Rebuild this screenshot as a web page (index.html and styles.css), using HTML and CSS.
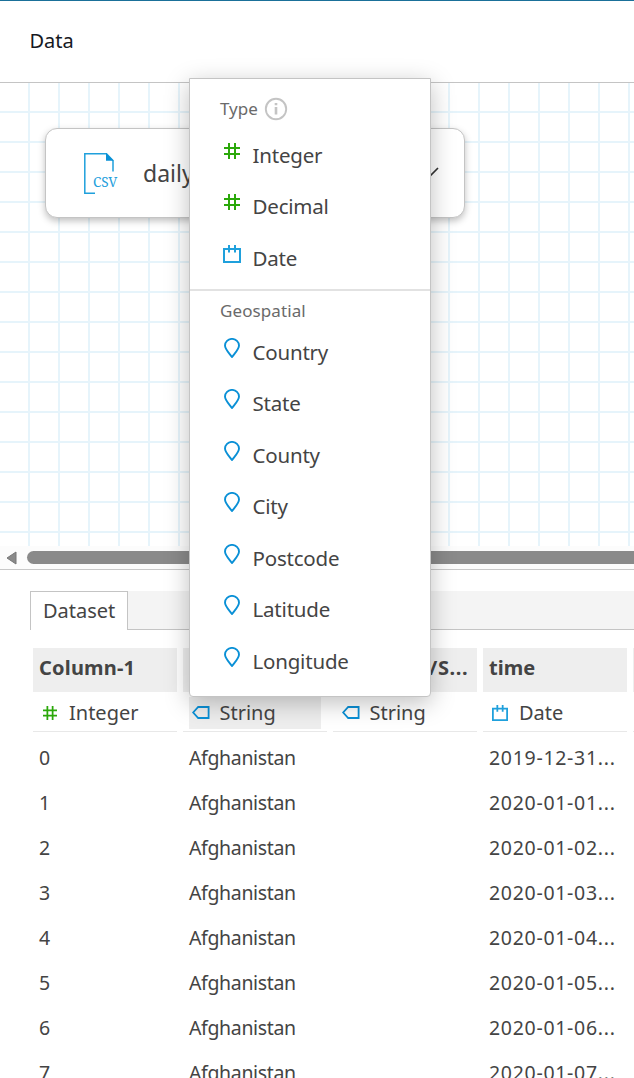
FILE: index.html
```html
<!DOCTYPE html>
<html lang="en">
<head>
<meta charset="utf-8">
<title>Data</title>
<link rel="stylesheet" href="styles.css">
</head>
<body>
<svg width="0" height="0" class="defs">
  <symbol id="hash" viewBox="0 0 16 16"><path d="M5 0v16M11 0v16M0 5h16M0 11h16" fill="none" stroke="#2ba80a" stroke-width="2"/></symbol>
  <symbol id="cal" viewBox="0 0 18 18"><path d="M1 4h16v13H1zM6 0v7.5M12 0v7.5" fill="none" stroke="#1fa0dc" stroke-width="2"/></symbol>
  <symbol id="pin" viewBox="0 0 16 20"><path d="M8 19C5.2 15.2 1 11.5 1 7.6A7 6.7 0 0 1 15 7.6C15 11.5 10.8 15.2 8 19z" fill="none" stroke="#0a90d6" stroke-width="1.9"/></symbol>
  <symbol id="tag" viewBox="0 0 18 13"><path d="M6.2 1H16.6V12H6.2L1.2 6.5z" fill="none" stroke="#0a90d6" stroke-width="1.8"/></symbol>
</svg>
<div class="app">
  <header class="topbar">Data</header>
  <section class="canvas">
    <div class="node">
      <svg class="csv" width="36" height="44" viewBox="0 0 36 44"><path d="M12 42.3H1.8V2.8H23.500L30 9.500V20.500" fill="none" stroke="#1fa0dc" stroke-width="1.500"/><path d="M23 2l7.700 7.700H23z" fill="#0a90d6"/><text x="10" y="36" font-size="13.500" textLength="24.500" lengthAdjust="spacingAndGlyphs">CSV</text></svg>
      <span class="node-name">daily_cases</span>
      <svg class="chev" width="18" height="12" viewBox="0 0 18 12"><path d="M1 1l8 8 8-8" fill="none" stroke="#333" stroke-width="1.700"/></svg>
    </div>
  </section>
  <div class="scroll">
    <svg width="11" height="14" viewBox="0 0 11 14"><path d="M10 1v12L1 7z" fill="#8a8a8a" stroke="#777" stroke-linejoin="round"/></svg>
    <div class="thumb"></div>
  </div>
  <section class="panel">
    <div class="tabs"><div class="tab">Dataset</div><div class="tabfill"></div></div>
    <div class="grid">
      <div class="th first">Column-1</div><div class="th"></div><div class="th prov">Province/S...</div><div class="th">time</div><div class="th"></div>
      <div class="type"><svg class="i-hash"><use href="#hash"/></svg>Integer</div>
      <div class="type active"><svg class="i-tag"><use href="#tag"/></svg>String</div>
      <div class="type"><svg class="i-tag"><use href="#tag"/></svg>String</div>
      <div class="type"><svg class="i-cal"><use href="#cal"/></svg>Date</div>
      <div class="type"></div>
    </div>
    <div class="rows">
      <div class="row"><span>0</span><span class="place">Afghanistan</span><span></span><span class="date">2019-12-31...</span></div>
      <div class="row"><span>1</span><span class="place">Afghanistan</span><span></span><span class="date">2020-01-01...</span></div>
      <div class="row"><span>2</span><span class="place">Afghanistan</span><span></span><span class="date">2020-01-02...</span></div>
      <div class="row"><span>3</span><span class="place">Afghanistan</span><span></span><span class="date">2020-01-03...</span></div>
      <div class="row"><span>4</span><span class="place">Afghanistan</span><span></span><span class="date">2020-01-04...</span></div>
      <div class="row"><span>5</span><span class="place">Afghanistan</span><span></span><span class="date">2020-01-05...</span></div>
      <div class="row"><span>6</span><span class="place">Afghanistan</span><span></span><span class="date">2020-01-06...</span></div>
      <div class="row"><span>7</span><span class="place">Afghanistan</span><span></span><span class="date">2020-01-07...</span></div>
    </div>
  </section>
  <div class="menu">
    <div class="group types">
      <div class="label">Type <svg width="24" height="24" viewBox="0 0 24 24"><circle cx="12" cy="12" r="10.200" fill="none" stroke="#c4c4c4" stroke-width="1.900"/><path d="M12 10v7.500M12 6v2.300" stroke="#c4c4c4" stroke-width="2.600"/></svg></div>
      <div class="item"><svg class="m-hash"><use href="#hash"/></svg><span>Integer</span></div>
      <div class="item"><svg class="m-hash"><use href="#hash"/></svg><span>Decimal</span></div>
      <div class="item"><svg class="m-cal"><use href="#cal"/></svg><span>Date</span></div>
    </div>
    <div class="group geo">
      <div class="label">Geospatial</div>
      <div class="item"><svg class="m-pin"><use href="#pin"/></svg><span>Country</span></div>
      <div class="item"><svg class="m-pin"><use href="#pin"/></svg><span>State</span></div>
      <div class="item"><svg class="m-pin"><use href="#pin"/></svg><span>County</span></div>
      <div class="item"><svg class="m-pin"><use href="#pin"/></svg><span>City</span></div>
      <div class="item"><svg class="m-pin"><use href="#pin"/></svg><span>Postcode</span></div>
      <div class="item"><svg class="m-pin"><use href="#pin"/></svg><span>Latitude</span></div>
      <div class="item"><svg class="m-pin"><use href="#pin"/></svg><span>Longitude</span></div>
    </div>
  </div>
</div>
</body>
</html>
```
FILE: styles.css
```css
* { box-sizing: border-box; }
body { margin: 0; font-family: "Noto Sans", sans-serif; color: #444; background: #fff; }
.defs { position: absolute; }
svg { flex: none; display: block; }
.app { position: relative; width: 634px; height: 1078px; overflow: hidden; display: flex; flex-direction: column; }
.topbar { height: 83px; flex: none; border-top: 1px solid #1a7099; border-bottom: 1px solid #c4c4c4; padding-left: 29.500px; font-size: 20px; line-height: 79px; color: #16191f; }
.canvas { height: 463px; flex: none; padding: 45px 0 0 45px;
  background: linear-gradient(90deg, #e6f4fb 2px, transparent 2px) 28px 28px / 30px 30px, linear-gradient(#e6f4fb 2px, transparent 2px) 28px 28px / 30px 30px; }
.node { width: 420px; height: 90px; background: #fff; border: 1px solid #c4c4c4; border-radius: 12px; box-shadow: 0 3px 7px rgba(0,0,0,.25); display: flex; align-items: center; padding: 0 25px 0 37px; }
.csv text { font-family: "Noto Serif", "DejaVu Serif", serif; fill: #1fa0dc; }
.node-name { font-size: 23px; margin-left: 24px; }
.chev { margin-left: auto; }
.scroll { height: 24px; flex: none; background: #fcfcfc; border-bottom: 1px solid #c8c8c8; display: flex; align-items: center; padding-left: 6px; }
.thumb { flex: 1; height: 13px; margin-left: 10px; background: #8a8a8a; border-radius: 7px 0 0 7px; }
.panel { flex: 1; padding: 21px 0 0 30px; }
.tabs { display: flex; height: 39px; }
.tab { width: 98px; border: 1px solid #c4c4c4; border-bottom: 0; padding-left: 12px; font-size: 20px; line-height: 38px; }
.tabfill { flex: 1; background: #f4f4f4; border-bottom: 1px solid #c4c4c4; }
.grid { display: grid; grid-template-columns: repeat(5, 144px); column-gap: 6px; margin: 18px 0 0 3px; width: 744px; }
.th { height: 44px; background: #eee; font-weight: 700; font-size: 20px; line-height: 39px; padding-left: 6px; white-space: nowrap; overflow: hidden; }
.first { letter-spacing: .2px; }
.prov { letter-spacing: .55px; }
.type { height: 40px; border-bottom: 1px solid #e8e8e8; display: flex; align-items: center; font-size: 20px; padding: 2px 0 0 9px; }
.active { background: linear-gradient(#eee, #eee) 6px 5px / 132px 32px no-repeat; }
.i-hash { width: 14px; height: 14px; margin: 0 12px 0 1px; }
.i-tag { width: 18px; height: 13px; margin-right: 9.500px; }
.i-cal { width: 16px; height: 16px; margin-right: 11px; }
.rows { margin: 3px 0 0 9px; }
.row { display: grid; grid-template-columns: repeat(4, 150px); height: 45px; line-height: 45px; font-size: 19.500px; }
.place { letter-spacing: -.35px; }
.date { letter-spacing: .7px; }
.menu { position: absolute; left: 189px; top: 78px; width: 242px; height: 619px; background: #fff; border: 1px solid #c4c4c4; border-radius: 0 0 4px 4px; box-shadow: 0 6px 24px rgba(0,0,0,.25); }
.group { padding: 0 0 0 30px; }
.types { height: 212px; padding-top: 17px; border-bottom: 2px solid #e2e2e2; }
.geo { padding-top: 7px; }
.label { height: 25px; display: flex; align-items: center; gap: 6px; font-size: 17px; color: #6a6a6a; }
.types .label { margin-bottom: 8px; }
.geo .label { margin-bottom: 3px; letter-spacing: .1px; }
.item { height: 51.500px; display: flex; align-items: center; font-size: 20.500px; letter-spacing: -.2px; }
.item svg { margin-bottom: 8px; }
.m-hash { width: 16px; height: 16px; margin: 0 12.500px 0 4px; }
.m-cal { width: 18px; height: 18px; margin: 0 11.500px 0 3px; }
.m-pin { width: 16px; height: 20px; margin: 0 12.500px 0 4px; }
```
